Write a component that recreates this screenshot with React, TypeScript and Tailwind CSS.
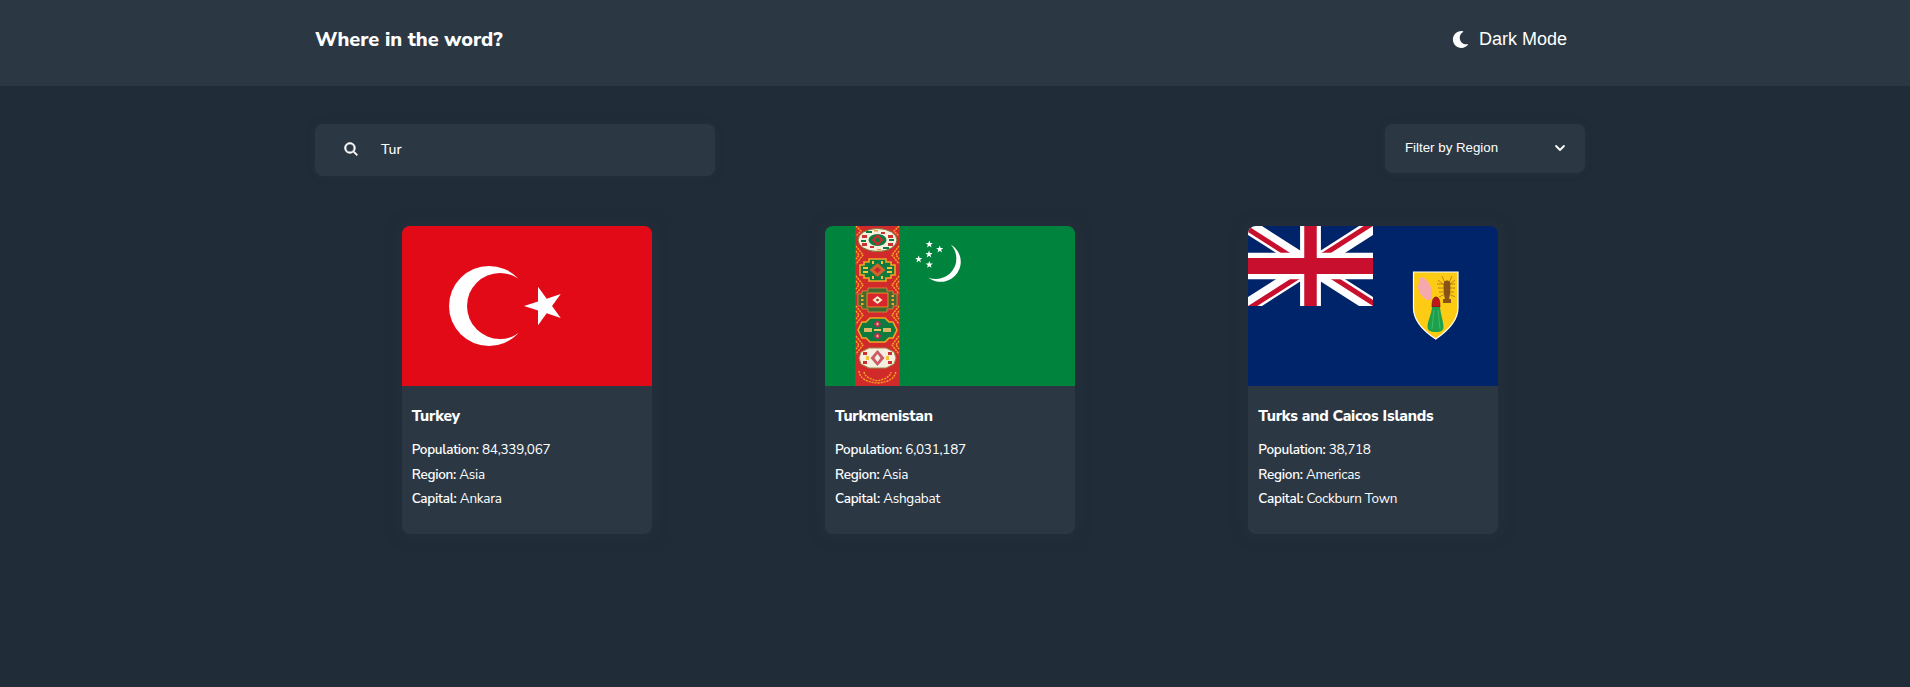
import { FaMoon } from "react-icons/fa";
import { IoChevronDown, IoSearch } from "react-icons/io5";

function TurkeyFlag() {
  return (
    <svg viewBox="0 0 250 160" className="block w-full h-40">
      <rect width="250" height="160" fill="#e30a17" />
      <circle cx="87" cy="80" r="40" fill="#fff" />
      <circle cx="98" cy="80" r="33" fill="#e30a17" />
      <polygon
        fill="#fff"
        points="122,80 136,75.44 136,60.7 144.7,72.63 158.7,68.1 150.05,80 158.7,91.9 144.7,87.37 136,99.3 136,84.56"
      />
    </svg>
  );
}

function Star({ x, y }: { x: number; y: number }) {
  return (
    <polygon
      fill="#fff"
      transform={`translate(${x} ${y}) scale(0.38)`}
      points="0,-10 2.4,-3.2 9.5,-3.1 3.8,1.2 5.9,8.1 0,4 -5.9,8.1 -3.8,1.2 -9.5,-3.1 -2.4,-3.2"
    />
  );
}

function SideDiamonds() {
  const rows = [0, 30, 60, 90];
  return (
    <g fill="none" stroke="#f5a623" strokeWidth="1.4" strokeDasharray="2 .8">
      {rows.map((y) => (
        <g key={y}>
          <path d={`M31 ${y + 20}l7 9-7 9M31 ${y + 25}l3 4-3 4`} />
          <path d={`M74 ${y + 20}l-7 9 7 9M74 ${y + 25}l-3 4 3 4`} />
        </g>
      ))}
      <path d="M31 0l5 5-5 5M74 0l-5 5 5 5" />
    </g>
  );
}

function TurkmenistanFlag() {
  return (
    <svg viewBox="0 0 250 160" className="block w-full h-40">
      <defs>
        <filter id="soft">
          <feGaussianBlur stdDeviation="0.3" />
        </filter>
      </defs>
      <rect width="250" height="160" fill="#00843d" />
      <g filter="url(#soft)">
        <rect x="30" width="45" height="160" fill="#d12a2c" />
        <SideDiamonds />

        {/* gul 1 */}
        <ellipse cx="52.5" cy="14" rx="19.5" ry="11.5" fill="#f4efdf" stroke="#7d6f30" strokeWidth="1" />
        <ellipse cx="52.5" cy="14" rx="9" ry="6" fill="#0a7a41" />
        <path d="M52.5 8l6 6-6 6-6-6z" fill="#cf2a2e" />
        <path d="M52.5 11l3 3-3 3-3-3z" fill="#0a7a41" />
        <g fill="#c9302f">
          <rect x="37" y="9" width="5" height="3" />
          <rect x="63" y="9" width="5" height="3" />
          <rect x="37" y="17" width="5" height="3" />
          <rect x="63" y="17" width="5" height="3" />
          <rect x="45" y="20" width="4" height="2" />
          <rect x="56" y="6" width="4" height="2" />
        </g>
        <g fill="#0a7a41">
          <rect x="41" y="5" width="6" height="2" />
          <rect x="58" y="21" width="6" height="2" />
          <rect x="36" y="14" width="5" height="2" />
          <rect x="64" y="13" width="5" height="2" />
        </g>
        <g fill="#e8a23a">
          <rect x="49" y="4" width="4" height="1.5" />
          <rect x="52" y="23" width="4" height="1.5" />
        </g>

        {/* gul 2 */}
        <path
          d="M44 33h17v3h5v3h4v10h-4v3h-5v3H44v-3h-5v-3h-4V39h4v-3h5z"
          fill="#0a7a41"
          stroke="#f5a623"
          strokeWidth="1.6"
        />
        <path d="M52.5 37l8 7-8 7-8-7z" fill="#d2662b" />
        <path d="M52.5 41l3.5 3-3.5 3-3.5-3z" fill="#c02a2e" />
        <g fill="#f5c23a">
          <rect x="38" y="41" width="5" height="2" />
          <rect x="38" y="45" width="5" height="2" />
          <rect x="62" y="41" width="5" height="2" />
          <rect x="62" y="45" width="5" height="2" />
          <rect x="47" y="35" width="2" height="3" />
          <rect x="56" y="35" width="2" height="3" />
          <rect x="47" y="50" width="2" height="3" />
          <rect x="56" y="50" width="2" height="3" />
        </g>

        {/* gul 3 */}
        <path
          d="M43 62h19v3h6v3h4v12h-4v3h-6v3H43v-3h-6v-3h-4V68h4v-3h6z"
          fill="#3f6a30"
          stroke="#e0913a"
          strokeWidth="0.8"
        />
        <rect x="42" y="67" width="21" height="14" fill="#d8272c" stroke="#f5a623" strokeWidth="0.8" />
        <path d="M52.5 70l5 4-5 4-5-4z" fill="#f6e9c8" />
        <path d="M52.5 72.5l1.8 1.5-1.8 1.5-1.8-1.5z" fill="#8c3a20" />
        <g fill="#f5a623">
          <rect x="36" y="69" width="2.5" height="2" />
          <rect x="36" y="73" width="2.5" height="2" />
          <rect x="36" y="77" width="2.5" height="2" />
          <rect x="66.5" y="69" width="2.5" height="2" />
          <rect x="66.5" y="73" width="2.5" height="2" />
          <rect x="66.5" y="77" width="2.5" height="2" />
        </g>

        {/* gul 4 */}
        <path
          d="M45 92h15l4 4h4l4 8-4 8h-4l-4 4H45l-4-4h-4l-4-8 4-8h4z"
          fill="#0a7a41"
          stroke="#f5a623"
          strokeWidth="1.6"
        />
        <path d="M52.5 94l4 4-4 4-4-4zM52.5 106l4 4-4 4-4-4z" fill="#b92f55" />
        <path d="M52.5 96.5l1.5 1.5-1.5 1.5-1.5-1.5zM52.5 108.5l1.5 1.5-1.5 1.5-1.5-1.5z" fill="#e9c36a" />
        <rect x="39" y="102" width="8" height="4" fill="#d9b763" />
        <rect x="58" y="102" width="8" height="4" fill="#d9b763" />
        <rect x="49" y="103" width="7" height="2" fill="#e9c36a" />

        {/* gul 5 */}
        <path
          d="M44 122h17l8 4 2 6-2 6-8 4H44l-8-4-2-6 2-6z"
          fill="#f4efdf"
          stroke="#9a8a48"
          strokeWidth="1"
        />
        <path d="M52.5 124l7 8-7 8-7-8z" fill="#cb5a66" />
        <path d="M52.5 128l3 4-3 4-3-4z" fill="#f4efdf" />
        <g fill="#c9302f">
          <rect x="38" y="126" width="4" height="3" />
          <rect x="63" y="126" width="4" height="3" />
          <rect x="38" y="135" width="4" height="3" />
          <rect x="63" y="135" width="4" height="3" />
        </g>
        <g fill="#f5c23a">
          <rect x="41" y="130" width="3" height="4" />
          <rect x="61" y="130" width="3" height="4" />
        </g>

        {/* laurel */}
        <path
          d="M34 145c1 8 8 11 18.5 12 10.5-1 17.5-4 18.5-12M39 146c1 5 6 7 13.5 9 7.5-2 12.5-4 13.5-9"
          fill="none"
          stroke="#f5a623"
          strokeWidth="1.4"
          strokeDasharray="2 1"
        />
      </g>

      <path d="M125.7 18.5A20 20 0 1 1 103.3 51.5 20.4 20.4 0 0 0 125.7 18.5z" fill="#fff" />
      <Star x={104.3} y={18.3} />
      <Star x={114.7} y={23.3} />
      <Star x={104} y={28.3} />
      <Star x={93.7} y={33.3} />
      <Star x={104.3} y={38.7} />
    </svg>
  );
}

function TurksCaicosFlag() {
  return (
    <svg viewBox="0 0 250 160" className="block w-full h-40">
      <defs>
        <clipPath id="jack">
          <path d="M30 15h30v15zv15h-30zh-30v-15zv-15h30z" />
        </clipPath>
        <filter id="soft2">
          <feGaussianBlur stdDeviation="0.35" />
        </filter>
      </defs>
      <rect width="250" height="160" fill="#00246a" />
      <svg x="0" y="0" width="125" height="80" viewBox="0 0 60 30" preserveAspectRatio="none">
        <path d="M0 0L60 30M60 0L0 30" stroke="#fff" strokeWidth="6" />
        <path d="M0 0L60 30M60 0L0 30" stroke="#c8102e" strokeWidth="4" clipPath="url(#jack)" />
        <path d="M30 0V30M0 15H60" stroke="#fff" strokeWidth="10" />
        <path d="M30 0V30M0 15H60" stroke="#c8102e" strokeWidth="6" />
      </svg>
      <path
        d="M165.5 46H210V82C210 96 198 106 187.7 113 177 106 165.5 96 165.5 82z"
        fill="#fecb14"
        stroke="#fff"
        strokeWidth="1.2"
      />
      <g filter="url(#soft2)">
        <path
          d="M171 53c3-3 5-2 7 1 4 3 6 9 6 14 0 5-2 7-4 6-4-1-7-5-9-8 1-2-1-3-2-5 2-1 2-4 2-8z"
          fill="#f5a8ad"
        />
        <g stroke="#a8741f" strokeWidth="0.8" fill="none">
          <path d="M189 58h18M190 62h17M191 66h15M190 54l6 5M207 54l-6 5M194 50l3 7M204 50l-3 7M191 71l6-3M207 71l-6-3" />
        </g>
        <path d="M196 56c1-2 5-2 6 0 1 5 0 14-1 17h2v4h-8v-4h2c-1-3-2-12-1-17z" fill="#8a5218" />
        <path d="M184 81c0-6 1-10 4-10s4 4 4 10z" fill="#c0141c" stroke="#5a1a1a" strokeWidth="0.7" />
        <path d="M184 81h8c.5 7 3.5 14 3.5 20 0 4-3 5-7.5 5s-8.5-1-8.5-5c0-6 4-13 4.5-20z" fill="#1fa04c" />
        <path d="M186 84l-2 19M190 84l2 19" stroke="#4cc274" strokeWidth="0.7" />
      </g>
    </svg>
  );
}

const countries = [
  { name: "Turkey", population: "84,339,067", region: "Asia", capital: "Ankara", flag: <TurkeyFlag /> },
  { name: "Turkmenistan", population: "6,031,187", region: "Asia", capital: "Ashgabat", flag: <TurkmenistanFlag /> },
  { name: "Turks and Caicos Islands", population: "38,718", region: "Americas", capital: "Cockburn Town", flag: <TurksCaicosFlag /> },
];

export default function App() {
  return (
    <div className="min-h-screen bg-[#202c37] text-white font-['Nunito_Sans','Lato',sans-serif]">
      <header className="h-[86px] bg-[#2b3844] flex items-center justify-between pl-[315px] pr-[343px] pb-[7px]">
        <h1 className="text-[20px] font-extrabold">Where in the word?</h1>
        <div className="flex items-center gap-[10px] font-['Liberation_Sans',sans-serif] text-[18px]">
          <FaMoon className="text-[17px]" />
          <span>Dark Mode</span>
        </div>
      </header>
      <main className="pl-[315px] pr-[325px] pt-[38px]">
        <div className="flex justify-between items-start">
          <div className="w-[400px] h-[52px] rounded-[8px] bg-[#2b3844] flex items-center pl-[28px] pb-[2px] shadow-[0_0_6px_1px_rgba(43,56,68,0.4)]">
            <IoSearch className="text-[16px] [&_*]:stroke-[15px]" />
            <span className="ml-[22px] text-[14px] font-medium">Tur</span>
          </div>
          <div className="w-[200px] h-[49px] rounded-[8px] bg-[#2b3844] flex items-center justify-between pl-[20px] pr-[18px] pb-[2px] font-['Liberation_Sans',sans-serif] text-[13.3px] shadow-[0_0_6px_1px_rgba(43,56,68,0.4)]">
            <span>Filter by Region</span>
            <IoChevronDown className="text-[14px] [&_*]:stroke-[70px]" />
          </div>
        </div>
        <div className="grid grid-cols-3 justify-items-center mt-[50px]">
          {countries.map((c) => (
            <article
              key={c.name}
              className="w-[250px] h-[308px] rounded-[8px] overflow-hidden bg-[#2b3844] shadow-[0_0_14px_4px_rgba(43,56,68,0.3)]"
            >
              {c.flag}
              <div className="pl-[10px] pt-[19px]">
                <h2 className="text-[15.5px] leading-[22px] font-extrabold tracking-[-0.2px] mb-[11px]">{c.name}</h2>
                <p className="text-[13.5px] leading-[24.5px] tracking-[-0.25px]"><b className="font-semibold">Population:</b> {c.population}</p>
                <p className="text-[13.5px] leading-[24.5px] tracking-[-0.25px]"><b className="font-semibold">Region:</b> {c.region}</p>
                <p className="text-[13.5px] leading-[24.5px] tracking-[-0.25px]"><b className="font-semibold">Capital:</b> {c.capital}</p>
              </div>
            </article>
          ))}
        </div>
      </main>
    </div>
  );
}
